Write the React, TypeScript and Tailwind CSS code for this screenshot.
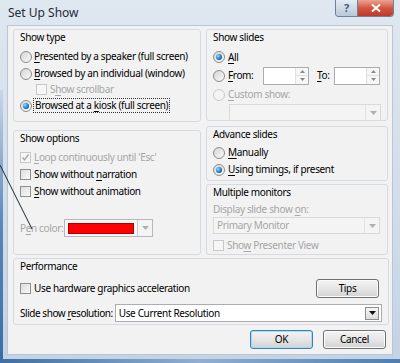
import React from 'react';

const Radio = ({ checked = false, disabled = false }: { checked?: boolean; disabled?: boolean }) => (
  <svg width="12" height="12" viewBox="0 0 12 12" className="shrink-0">
    <defs>
      <linearGradient id="radioFill" x1="0" y1="0" x2="1" y2="1">
        <stop offset="0" stopColor="#d4d4d4" />
        <stop offset="1" stopColor="#fbfbfb" />
      </linearGradient>
      <radialGradient id="radioDot" cx="0.35" cy="0.35" r="0.8">
        <stop offset="0" stopColor="#9fdcff" />
        <stop offset="0.5" stopColor="#2c8fd6" />
        <stop offset="1" stopColor="#0b3f78" />
      </radialGradient>
    </defs>
    <circle
      cx="6"
      cy="6"
      r="5.5"
      fill={disabled ? '#f4f4f4' : 'url(#radioFill)'}
      stroke={disabled ? '#cacaca' : '#8d8d8d'}
    />
    {checked && <circle cx="6" cy="6" r="3" fill="url(#radioDot)" />}
  </svg>
);

const Check = ({ checked = false, disabled = false }: { checked?: boolean; disabled?: boolean }) => (
  <svg width="11" height="11" viewBox="0 0 11 11" className="shrink-0">
    <defs>
      <linearGradient id="checkFill" x1="0" y1="0" x2="1" y2="1">
        <stop offset="0" stopColor="#dcdcdc" />
        <stop offset="1" stopColor="#fafafa" />
      </linearGradient>
    </defs>
    <rect
      x="0.5"
      y="0.5"
      width="10"
      height="10"
      fill={disabled ? '#f6f6f6' : 'url(#checkFill)'}
      stroke={disabled ? '#c8c8c8' : '#8e8f8f'}
    />
    {checked && (
      <path d="M2.5 5.5 L4.5 7.8 L8.5 2.5" fill="none" stroke={disabled ? '#a8a8a8' : '#222'} strokeWidth="1.4" />
    )}
  </svg>
);

const ArrowBox = ({ disabled = false }: { disabled?: boolean }) => (
  <div
    className={`w-[15px] h-full flex items-center justify-center border-l ${
      disabled ? 'border-[#e2e2e2] bg-[#f4f4f4]' : 'border-[#c9c9c9] bg-[#f4f4f4]'
    }`}
  >
    <svg width="7" height="4" viewBox="0 0 7 4">
      <path d="M0 0 L7 0 L3.5 4 Z" fill="#b0b0b0" />
    </svg>
  </div>
);

const Spin = () => (
  <div className="w-[46px] h-[18px] border border-[#abadb3] bg-white flex justify-end">
    <div className="w-[13px] h-full flex flex-col border-l border-[#e0e0e0]">
      <div className="flex-1 flex items-center justify-center border-b border-[#e0e0e0] bg-[#f6f6f6]">
        <svg width="5" height="3" viewBox="0 0 5 3">
          <path d="M0 3 L5 3 L2.5 0 Z" fill="#888" />
        </svg>
      </div>
      <div className="flex-1 flex items-center justify-center bg-[#f6f6f6]">
        <svg width="5" height="3" viewBox="0 0 5 3">
          <path d="M0 0 L5 0 L2.5 3 Z" fill="#888" />
        </svg>
      </div>
    </div>
  </div>
);

const Group = ({
  title,
  className,
  bodyClass = '',
  children,
}: {
  title: string;
  className: string;
  bodyClass?: string;
  children?: React.ReactNode;
}) => (
  <div className={`border border-[#d5dbe0] rounded-[3px] px-[6px] flex flex-col ${className}`}>
    <div className="h-[14px] leading-[14px]">{title}</div>
    <div className={`flex flex-col ${bodyClass}`}>{children}</div>
  </div>
);

const U = ({ children }: { children: React.ReactNode }) => <span className="underline underline-offset-2">{children}</span>;

const Button = ({ children, primary = false }: { children: React.ReactNode; primary?: boolean }) => (
  <div
    className={`w-[63px] h-[19px] rounded-[3px] border flex items-center justify-center bg-gradient-to-b from-[#f3f3f3] via-[#e6e6e6] to-[#d2d2d2] ${
      primary ? 'border-[#3c7fb1] shadow-[inset_0_0_0_1px_#a8dcf5]' : 'border-[#707070] shadow-[inset_0_0_0_1px_#fcfcfc]'
    }`}
  >
    {children}
  </div>
);

export default function App() {
  return (
    <div className="relative w-[400px] h-[363px] overflow-hidden whitespace-nowrap bg-gradient-to-b from-[#dfe7f0] via-[#d3deea] to-[#c3d3e4] text-[10px] tracking-[-0.35px] text-black font-['Noto_Sans',sans-serif]">
      {/* glass edges */}
      <div className="absolute left-0 top-[90px] w-[3px] h-[273px] bg-gradient-to-b from-[#c9d7e6] via-[#5a86b8] to-[#3a6da3]" />
      <div className="absolute left-0 bottom-0 w-full h-[4px] bg-gradient-to-r from-[#3d6fa6] via-[#8fb0d0] to-[#4d7eb2]" />

      {/* title bar */}
      <div className="h-[25px] pl-[8px] flex items-center text-[12px] tracking-normal text-[#1e2b3a]">Set Up Show</div>

      {/* caption buttons */}
      <div className="absolute top-0 left-[335px] h-[17px] flex border border-t-0 border-[#6d819a] rounded-b-[4px] overflow-hidden">
        <div className="w-[22px] h-full flex items-center justify-center border-r border-[#6d819a] bg-gradient-to-b from-[#e4ecf4] to-[#b8c8da] text-[11px] font-bold text-[#435a76]">
          ?
        </div>
        <div className="w-[35px] h-full flex items-center justify-center bg-gradient-to-b from-[#e8a594] via-[#d3553f] to-[#c0392b]">
          <svg width="10" height="8" viewBox="0 0 10 8">
            <path d="M1 0.5 L9 7.5 M9 0.5 L1 7.5" stroke="#fff" strokeWidth="2" />
          </svg>
        </div>
      </div>

      {/* client area */}
      <div className="ml-[7px] w-[386px] h-[330px] bg-[#f2f2f2] border border-[#b9c6d4] flex flex-col">
        <div className="flex gap-[5px] pl-[5px] pt-[3px]">
          {/* left column */}
          <div className="w-[188px] flex flex-col gap-[8px]">
            <Group title="Show type" className="h-[93px]">
              <div className="mt-[4px] h-[17px] flex items-center gap-[2px]">
                <Radio />
                <span>
                  <U>P</U>resented by a speaker (full screen)
                </span>
              </div>
              <div className="h-[17px] flex items-center gap-[2px]">
                <Radio />
                <span>
                  <U>B</U>rowsed by an individual (window)
                </span>
              </div>
              <div className="h-[15px] flex items-center gap-[3px] pl-[16px] text-[#a6a6a6]">
                <Check disabled />
                <span>
                  S<U>h</U>ow scrollbar
                </span>
              </div>
              <div className="h-[17px] flex items-center gap-[1px]">
                <Radio checked />
                <span className="border border-dotted border-[#333] px-[1px] leading-[13px]">
                  Browsed at a <U>k</U>iosk (full screen)
                </span>
              </div>
            </Group>
            <Group title="Show options" className="h-[125px]">
              <div className="mt-[4px] h-[17px] flex items-center gap-[3px] text-[#a6a6a6]">
                <Check checked disabled />
                <span>
                  <U>L</U>oop continuously until 'Esc'
                </span>
              </div>
              <div className="h-[17px] flex items-center gap-[3px]">
                <Check />
                <span>
                  Show without <U>n</U>arration
                </span>
              </div>
              <div className="h-[17px] flex items-center gap-[3px]">
                <Check />
                <span>
                  <U>S</U>how without animation
                </span>
              </div>
              <div className="mt-[19px] h-[18px] flex items-center gap-[6px]">
                <span className="text-[#a6a6a6] w-[38px]">
                  P<U>e</U>n color:
                </span>
                <div className="w-[89px] h-[18px] border border-[#b7b7b7] bg-[#f7f7f7] flex items-center">
                  <div className="ml-[3px] w-[66px] h-[11px] bg-[#ff0000] border border-[#b00000]" />
                  <div className="ml-auto h-full">
                    <ArrowBox />
                  </div>
                </div>
              </div>
            </Group>
          </div>

          {/* right column */}
          <div className="w-[182px] flex flex-col">
            <Group title="Show slides" className="h-[92px]">
              <div className="mt-[4px] h-[18px] flex items-center gap-[3px]">
                <Radio checked />
                <span>
                  <U>A</U>ll
                </span>
              </div>
              <div className="h-[19px] flex items-center">
                <Radio />
                <span className="ml-[3px] w-[35px]">
                  <U>F</U>rom:
                </span>
                <Spin />
                <span className="ml-[8px] w-[17px]">
                  <U>T</U>o:
                </span>
                <Spin />
              </div>
              <div className="h-[19px] flex items-center gap-[3px] text-[#a6a6a6]">
                <Radio disabled />
                <span>
                  <U>C</U>ustom show:
                </span>
              </div>
              <div className="ml-[16px] w-[152px] h-[17px] border border-[#d9d9d9] bg-[#f4f4f4] flex justify-end">
                <ArrowBox disabled />
              </div>
            </Group>
            <Group title="Advance slides" className="mt-[5px] h-[55px]">
              <div className="mt-[3px] h-[17px] flex items-center gap-[3px]">
                <Radio />
                <span>
                  <U>M</U>anually
                </span>
              </div>
              <div className="h-[17px] flex items-center gap-[3px]">
                <Radio checked />
                <span>
                  <U>U</U>sing timings, if present
                </span>
              </div>
            </Group>
            <Group title="Multiple monitors" className="mt-[3px] h-[71px]" bodyClass="text-[#a6a6a6]">
              <div className="mt-[2px] h-[16px] leading-[16px]">
                Display slide show <U>o</U>n:
              </div>
              <div className="w-[167px] h-[17px] border border-[#d9d9d9] bg-[#f4f4f4] flex items-center pl-[3px]">
                <span>Primary Monitor</span>
                <div className="ml-auto h-full">
                  <ArrowBox disabled />
                </div>
              </div>
              <div className="mt-[4px] h-[14px] flex items-center gap-[3px]">
                <Check disabled />
                <span>
                  Sho<U>w</U> Presenter View
                </span>
              </div>
            </Group>
          </div>
        </div>

        {/* performance */}
        <div className="ml-[5px] mt-[3px] w-[376px] h-[67px] border border-[#d5dbe0] rounded-[3px] px-[6px] flex flex-col">
          <div className="h-[14px] leading-[14px]">Performance</div>
          <div className="mt-[6px] h-[18px] flex items-center">
            <Check />
            <span className="ml-[3px]">
              Use hardware <U>g</U>raphics acceleration
            </span>
            <div className="ml-auto mr-[3px]">
              <Button>Tips</Button>
            </div>
          </div>
          <div className="mt-[7px] h-[18px] flex items-center gap-[2px]">
            <span className="shrink-0 tracking-[-0.45px]">
              Slide show <U>r</U>esolution:
            </span>
            <div className="flex-1 h-[18px] border border-[#abadb3] bg-white flex items-center pl-[3px]">
              <span>Use Current Resolution</span>
              <div className="ml-auto mr-[2px] w-[14px] h-[13px] border border-[#8e8e8e] bg-gradient-to-b from-[#f7f7f7] to-[#dcdcdc] flex items-center justify-center">
                <svg width="7" height="4" viewBox="0 0 7 4">
                  <path d="M0 0 L7 0 L3.5 4 Z" fill="#111" />
                </svg>
              </div>
            </div>
          </div>
        </div>

        {/* dialog buttons */}
        <div className="mt-[5px] pr-[6px] flex justify-end gap-[10px]">
          <Button primary>OK</Button>
          <Button>Cancel</Button>
        </div>
      </div>

      {/* annotation line */}
      <svg className="absolute left-0 top-0 pointer-events-none" width="400" height="363">
        <line x1="0" y1="165" x2="32" y2="229" stroke="#1b2633" strokeWidth="1" />
      </svg>
    </div>
  );
}
